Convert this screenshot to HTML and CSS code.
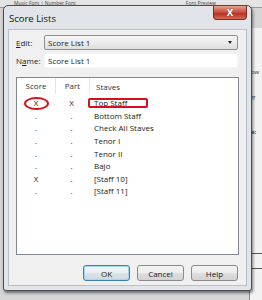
FILE: index.html
```html
<!DOCTYPE html>
<html lang="en">
<head>
    <meta charset="UTF-8">
    <title>Score Lists</title>
    <link rel="stylesheet" href="styles.css">
</head>
<body>
    <div class="desktop">
        <div class="behind-top">
            <span class="behind-tab">Music Font | Number Font</span>
            <span class="behind-preview">Font Preview</span>
        </div>
        <div class="behind-right">
            <span class="bit bit-1">ow</span>
            <span class="bit bit-2">ff</span>
            <span class="bit bit-3">e:</span>
            <div class="bit-lines"></div>
        </div>

        <div class="dialog">
            <div class="titlebar">
                <span class="title">Score Lists</span>
                <div class="close-btn"><span>X</span></div>
            </div>

            <div class="client">
                <div class="fields">
                    <label class="field-label"><u>E</u>dit:</label>
                    <div class="combo">
                        <span>Score List 1</span>
                        <span class="combo-arrow"></span>
                    </div>
                    <label class="field-label">N<u>a</u>me:</label>
                    <div class="textbox">Score List 1</div>
                </div>

                <div class="listbox">
                    <div class="list-head">
                        <span class="col-score">Score</span>
                        <span class="col-part">Part</span>
                        <span class="col-staves">Staves</span>
                    </div>
                    <div class="list-rows">
                        <div class="row"><span class="col-score">X</span><span class="col-part">X</span><span class="col-staves">Top Staff</span></div>
                        <div class="row"><span class="col-score">.</span><span class="col-part">.</span><span class="col-staves">Bottom Staff</span></div>
                        <div class="row"><span class="col-score">.</span><span class="col-part">.</span><span class="col-staves">Check All Staves</span></div>
                        <div class="row"><span class="col-score">.</span><span class="col-part">.</span><span class="col-staves">Tenor I</span></div>
                        <div class="row"><span class="col-score">.</span><span class="col-part">.</span><span class="col-staves">Tenor II</span></div>
                        <div class="row"><span class="col-score">.</span><span class="col-part">.</span><span class="col-staves">Bajo</span></div>
                        <div class="row"><span class="col-score">X</span><span class="col-part">.</span><span class="col-staves">[Staff 10]</span></div>
                        <div class="row"><span class="col-score">.</span><span class="col-part">.</span><span class="col-staves">[Staff 11]</span></div>
                    </div>
                    <!-- red annotation marks -->
                    <div class="mark-ellipse"></div>
                    <div class="mark-box"></div>
                </div>

                <div class="buttons">
                    <button class="btn btn-default">OK</button>
                    <button class="btn">Cancel</button>
                    <button class="btn">Help</button>
                </div>
            </div>
        </div>
    </div>
</body>
</html>
```

FILE: styles.css
```css
body {
    margin: 0;
    font-family: "Open Sans", "Noto Sans", sans-serif;
    font-size: 8px;
    color: #222;
    background-color: #cfcfcf;
}
.desktop {
    position: relative;
    width: 262px;
    height: 300px;
    overflow: hidden;
    background-color: #d6d6d6;
}
.behind-top {
    height: 7px;
    display: flex;
    align-items: flex-start;
    background-color: #e4e4e4;
    border-bottom: 1px solid #999;
    font-size: 5px;
    line-height: 6px;
}
.behind-tab {
    margin-left: 14px;
    color: #444;
}
.behind-preview {
    margin-left: 110px;
    color: #444;
}
.behind-right {
    position: absolute;
    top: 28px;
    right: 0;
    width: 12px;
    height: 272px;
    background-color: #f2f2f2;
    border-left: 1px solid #888;
}
.bit {
    position: absolute;
    left: 1px;
    font-size: 6px;
    color: #333;
}
.bit-1 { top: 40px; }
.bit-2 { top: 66px; }
.bit-3 { top: 100px; font-weight: bold; }
.bit-lines {
    position: absolute;
    left: 0;
    right: 0;
    top: 225px;
    height: 14px;
    border-top: 1px solid #555;
    border-bottom: 1px solid #555;
}
.dialog {
    position: absolute;
    left: 3px;
    top: 5px;
    width: 249px;
    height: 286px;
    box-sizing: border-box;
    display: flex;
    flex-direction: column;
    background-color: #e1e5ea;
    border: 1px solid #4a4f55;
    border-radius: 5px 5px 3px 3px;
    box-shadow: 1px 2px 3px rgba(0, 0, 0, 0.5);
}
.titlebar {
    height: 23px;
    display: flex;
    align-items: center;
    position: relative;
    flex-shrink: 0;
}
.title {
    margin-left: 5px;
    margin-top: 1px;
    font-size: 9.5px;
    color: #111;
}
.close-btn {
    position: absolute;
    top: 0;
    right: 4px;
    width: 34px;
    height: 14px;
    box-sizing: border-box;
    border: 1px solid #7a2b22;
    border-top: none;
    border-radius: 0 0 4px 4px;
    background: linear-gradient(#e6a190, #c8493a 50%, #b53324 60%, #d96b55);
    display: flex;
    align-items: center;
    justify-content: center;
}
.close-btn span {
    font-family: "DejaVu Sans", sans-serif;
    font-weight: bold;
    font-size: 9px;
    color: #fff;
    text-shadow: 0 0 1px #5a1a10;
}
.client {
    flex: 1;
    margin: 0 4px 4px 4px;
    background-color: #f0f0f0;
    border: 1px solid #b9c0c8;
    padding: 5px 8px 4px 7px;
    display: flex;
    flex-direction: column;
}
.fields {
    display: grid;
    grid-template-columns: 28px 194px;
    row-gap: 3px;
    align-items: center;
}
.field-label {
    color: #222;
}
.combo {
    height: 15px;
    box-sizing: border-box;
    border: 1px solid #8e8f8f;
    border-radius: 2px;
    background: linear-gradient(#f6f6f6, #ececec 50%, #dedede);
    display: flex;
    align-items: center;
    justify-content: space-between;
    padding: 0 5px 0 3px;
}
.combo-arrow {
    width: 0;
    height: 0;
    border-left: 2.5px solid transparent;
    border-right: 2.5px solid transparent;
    border-top: 3px solid #222;
}
.textbox {
    height: 15px;
    box-sizing: border-box;
    border: 1px solid #f4f4f4;
    background-color: #fff;
    padding: 0 3px;
    display: flex;
    align-items: center;
}
.listbox {
    position: relative;
    margin-top: 9px;
    width: 223px;
    height: 178px;
    box-sizing: border-box;
    border: 1px solid #828790;
    background-color: #fff;
}
.list-head {
    height: 16px;
    display: flex;
    align-items: center;
    color: #333;
}
.list-head .col-score,
.list-head .col-part {
    border-right: 1px solid #e3e6ea;
    height: 16px;
    line-height: 16px;
}
.col-score {
    width: 38px;
    flex-shrink: 0;
    text-align: center;
}
.col-part {
    width: 33px;
    flex-shrink: 0;
    text-align: center;
}
.col-staves {
    padding-left: 6px;
}
.list-rows {
    padding-top: 3px;
}
.row {
    display: flex;
    height: 12.65px;
    line-height: 12.65px;
}
.mark-ellipse {
    position: absolute;
    left: 7px;
    top: 19px;
    width: 25px;
    height: 13px;
    box-sizing: border-box;
    border: 2px solid #d4101a;
    border-radius: 50%;
}
.mark-box {
    position: absolute;
    left: 71px;
    top: 20px;
    width: 60px;
    height: 10px;
    box-sizing: border-box;
    border: 2px solid #d4101a;
    border-radius: 2px;
}
.buttons {
    margin-top: auto;
    display: flex;
    justify-content: flex-end;
    gap: 7px;
}
.btn {
    width: 47px;
    height: 16px;
    padding: 0;
    font-family: inherit;
    font-size: 8px;
    color: #222;
    border: 1px solid #8a8a8a;
    border-radius: 3px;
    background: linear-gradient(#f4f4f4, #ececec 50%, #dfdfdf 51%, #d2d2d2);
}
.btn-default {
    border-color: #3c7fb1;
    box-shadow: inset 0 0 0 1px #a6d7f2;
    background: linear-gradient(#f2f7fa, #e8eef2 50%, #dbe3e8 51%, #d0d9df);
}
```
